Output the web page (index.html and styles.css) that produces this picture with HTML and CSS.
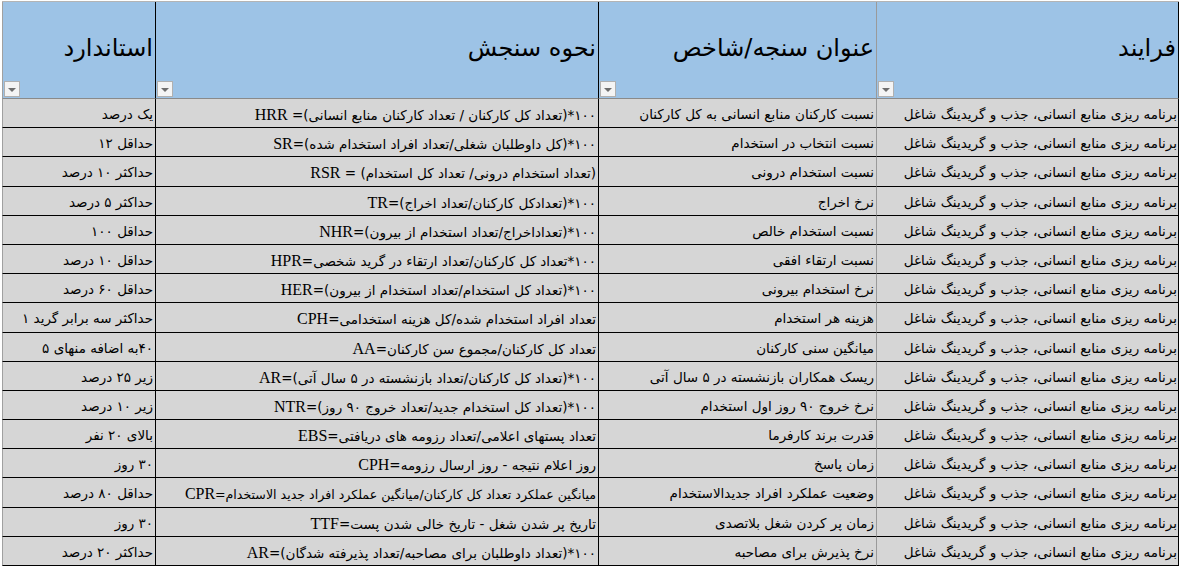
FILE: index.html
```html
<!DOCTYPE html>
<html lang="fa">
<head>
<meta charset="utf-8">
<title>شاخص‌ها</title>
<link rel="stylesheet" href="styles.css">
</head>
<body>
<div class="sheet" dir="rtl">
  <div class="hcell c1"><span class="htext">فرایند</span><span class="filter"><span class="tri"></span></span></div>
  <div class="hcell c2"><span class="htext">عنوان سنجه/شاخص</span><span class="filter"><span class="tri"></span></span></div>
  <div class="hcell c3"><span class="htext">نحوه سنجش</span><span class="filter"><span class="tri"></span></span></div>
  <div class="hcell c4"><span class="htext">استاندارد</span><span class="filter"><span class="tri"></span></span></div>

  <div class="cell c1">برنامه ریزی منابع انسانی، جذب و گریدینگ شاغل</div>
  <div class="cell c2">نسبت کارکنان منابع انسانی به کل کارکنان</div>
  <div class="cell c3 m">۱۰۰*(تعداد کل کارکنان / تعداد کارکنان منابع انسانی)= <span class="code">HRR</span></div>
  <div class="cell c4">یک درصد</div>

  <div class="cell c1">برنامه ریزی منابع انسانی، جذب و گریدینگ شاغل</div>
  <div class="cell c2">نسبت انتخاب در استخدام</div>
  <div class="cell c3 m">۱۰۰*(کل داوطلبان شغلی/تعداد افراد استخدام شده)=<span class="code">SR</span></div>
  <div class="cell c4">حداقل ۱۲</div>

  <div class="cell c1">برنامه ریزی منابع انسانی، جذب و گریدینگ شاغل</div>
  <div class="cell c2">نسبت استخدام درونی</div>
  <div class="cell c3 m">(تعداد استخدام درونی/ تعداد کل استخدام) = <span class="code">RSR</span></div>
  <div class="cell c4">حداکثر ۱۰ درصد</div>

  <div class="cell c1">برنامه ریزی منابع انسانی، جذب و گریدینگ شاغل</div>
  <div class="cell c2">نرخ اخراج</div>
  <div class="cell c3 m">۱۰۰*(تعدادکل کارکنان/تعداد اخراج)=<span class="code">TR</span></div>
  <div class="cell c4">حداکثر ۵ درصد</div>

  <div class="cell c1">برنامه ریزی منابع انسانی، جذب و گریدینگ شاغل</div>
  <div class="cell c2">نسبت استخدام خالص</div>
  <div class="cell c3 m">۱۰۰*(تعداداخراج/تعداد استخدام از بیرون)=<span class="code">NHR</span></div>
  <div class="cell c4">حداقل ۱۰۰</div>

  <div class="cell c1">برنامه ریزی منابع انسانی، جذب و گریدینگ شاغل</div>
  <div class="cell c2">نسبت ارتقاء افقی</div>
  <div class="cell c3 m">۱۰۰*تعداد کل کارکنان/تعداد ارتقاء در گرید شخصی=<span class="code">HPR</span></div>
  <div class="cell c4">حداقل ۱۰ درصد</div>

  <div class="cell c1">برنامه ریزی منابع انسانی، جذب و گریدینگ شاغل</div>
  <div class="cell c2">نرخ استخدام بیرونی</div>
  <div class="cell c3 m">۱۰۰*(تعداد کل استخدام/تعداد استخدام از بیرون)=<span class="code">HER</span></div>
  <div class="cell c4">حداقل ۶۰ درصد</div>

  <div class="cell c1">برنامه ریزی منابع انسانی، جذب و گریدینگ شاغل</div>
  <div class="cell c2">هزینه هر استخدام</div>
  <div class="cell c3 m">تعداد افراد استخدام شده/کل هزینه استخدامی=<span class="code">CPH</span></div>
  <div class="cell c4">حداکثر سه برابر گرید ۱</div>

  <div class="cell c1">برنامه ریزی منابع انسانی، جذب و گریدینگ شاغل</div>
  <div class="cell c2">میانگین سنی کارکنان</div>
  <div class="cell c3 m">تعداد کل کارکنان/مجموع سن کارکنان=<span class="code">AA</span></div>
  <div class="cell c4">۴۰به اضافه منهای ۵</div>

  <div class="cell c1">برنامه ریزی منابع انسانی، جذب و گریدینگ شاغل</div>
  <div class="cell c2">ریسک همکاران بازنشسته در ۵ سال آتی</div>
  <div class="cell c3 m">۱۰۰*(تعداد کل کارکنان/تعداد بازنشسته در ۵ سال آتی)=<span class="code">AR</span></div>
  <div class="cell c4">زیر ۲۵ درصد</div>

  <div class="cell c1">برنامه ریزی منابع انسانی، جذب و گریدینگ شاغل</div>
  <div class="cell c2">نرخ خروج ۹۰ روز اول استخدام</div>
  <div class="cell c3 m">۱۰۰*(تعداد کل استخدام جدید/تعداد خروج ۹۰ روز)=<span class="code">NTR</span></div>
  <div class="cell c4">زیر ۱۰ درصد</div>

  <div class="cell c1">برنامه ریزی منابع انسانی، جذب و گریدینگ شاغل</div>
  <div class="cell c2">قدرت برند کارفرما</div>
  <div class="cell c3 m">تعداد پستهای اعلامی/تعداد رزومه های دریافتی=<span class="code">EBS</span></div>
  <div class="cell c4">بالای ۲۰ نفر</div>

  <div class="cell c1">برنامه ریزی منابع انسانی، جذب و گریدینگ شاغل</div>
  <div class="cell c2">زمان پاسخ</div>
  <div class="cell c3 m">روز اعلام نتیجه - روز ارسال رزومه=<span class="code">CPH</span></div>
  <div class="cell c4">۳۰ روز</div>

  <div class="cell c1">برنامه ریزی منابع انسانی، جذب و گریدینگ شاغل</div>
  <div class="cell c2">وضعیت عملکرد افراد جدیدالاستخدام</div>
  <div class="cell c3 m tight">میانگین عملکرد تعداد کل کارکنان/میانگین عملکرد افراد جدید الاستخدام=<span class="code">CPR</span></div>
  <div class="cell c4">حداقل ۸۰ درصد</div>

  <div class="cell c1">برنامه ریزی منابع انسانی، جذب و گریدینگ شاغل</div>
  <div class="cell c2">زمان پر کردن شغل بلاتصدی</div>
  <div class="cell c3 m">تاریخ پر شدن شغل - تاریخ خالی شدن پست=<span class="code">TTF</span></div>
  <div class="cell c4">۳۰ روز</div>

  <div class="cell c1">برنامه ریزی منابع انسانی، جذب و گریدینگ شاغل</div>
  <div class="cell c2">نرخ پذیرش برای مصاحبه</div>
  <div class="cell c3 m">۱۰۰*(تعداد داوطلبان برای مصاحبه/تعداد پذیرفته شدگان)=<span class="code">AR</span></div>
  <div class="cell c4">حداکثر ۲۰ درصد</div>
</div>
</body>
</html>
```

FILE: styles.css
```css
html, body {
  margin: 0;
  padding: 0;
  background: #ffffff;
}

body {
  padding: 1px 0 0 2px;
}

.sheet {
  display: grid;
  grid-template-columns: 303px 278px 443px 153px;
  grid-template-rows: 97px repeat(16, 29.2px);
  width: 1177px;
  border-top: 1px solid #b4b4b4;
  font-family: "DejaVu Sans", sans-serif;
  color: #000;
}

.hcell, .cell {
  box-sizing: border-box;
  border-left: 1px solid #000;
  min-width: 0;
}

.c1 {
  border-right: 1px solid #000;
  border-left-color: #9a9a9a;
}

.c4 {
  border-left-color: #a0a0a0;
}

.hcell {
  background: #9dc3e6;
  border-bottom: 1px solid #8a8a8a;
  display: flex;
  flex-direction: column;
  justify-content: space-between;
  padding: 28px 2px 1px 1px;
}

.htext {
  font-size: 24px;
  line-height: 36px;
  text-align: right;
  white-space: nowrap;
}

.filter {
  align-self: flex-end;
  box-sizing: border-box;
  width: 16px;
  height: 16px;
  background: #f4f4f4;
  border: 1px solid #b0b0b0;
  display: flex;
  align-items: center;
  justify-content: center;
}

.tri {
  width: 0;
  height: 0;
  border-left: 4px solid transparent;
  border-right: 4px solid transparent;
  border-top: 4px solid #6e6e6e;
  margin-top: 1px;
}

.cell {
  background: #d6d6d6;
  border-bottom: 1px solid #000;
  font-size: 13.5px;
  line-height: 29px;
  padding: 1px 2px 0 1px;
  white-space: nowrap;
  overflow: hidden;
  text-align: right;
}

.c1.cell {
  padding-right: 1px;
}

.code {
  font-family: "Liberation Serif", serif;
  font-size: 16px;
}

.cell.tight {
  font-size: 12.6px;
  letter-spacing: -0.1px;
}
```
